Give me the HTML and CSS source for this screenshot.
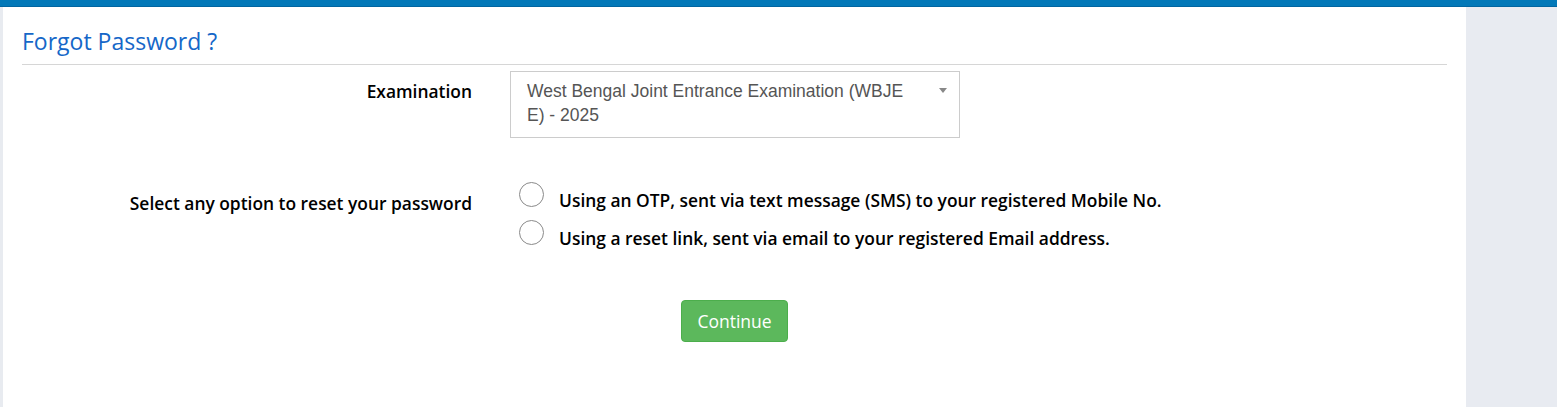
FILE: index.html
```html
<!DOCTYPE html>
<html lang="en">
<head>
    <meta charset="UTF-8">
    <meta name="viewport" content="width=device-width, initial-scale=1.0">
    <title>Forgot Password</title>
    <link rel="stylesheet" href="styles.css">
</head>
<body>

    <div class="top-bar"></div>

    <div class="page">
        <div class="side-strip"></div>

        <div class="main-panel">
            <h3 class="page-title">Forgot Password ?</h3>
            <hr class="title-rule">

            <form id="forgot-form" class="forgot-form">
                <div class="form-row exam-row">
                    <label class="form-label">Examination</label>
                    <div class="fake-select">
                        <span class="fake-select-text">West Bengal Joint Entrance Examination (WBJEE) - 2025</span>
                        <span class="fake-select-arrow"></span>
                    </div>
                </div>

                <div class="form-row option-row">
                    <label class="form-label option-label">Select any option to reset your password</label>
                    <div class="option-list">
                        <label class="option-item">
                            <input type="radio" name="resetmode" value="sms">
                            <span>Using an OTP, sent via text message (SMS) to your registered Mobile No.</span>
                        </label>
                        <label class="option-item">
                            <input type="radio" name="resetmode" value="email">
                            <span>Using a reset link, sent via email to your registered Email address.</span>
                        </label>
                    </div>
                </div>

                <div class="button-row">
                    <button type="submit" class="btn-continue">Continue</button>
                </div>
            </form>
        </div>

        <div class="side-panel"></div>
    </div>

</body>
</html>
```

FILE: styles.css
```css
html, body {
    height: 100%;
}

body {
    margin: 0;
    font-family: 'Open Sans', 'Liberation Sans', sans-serif;
    background-color: #e8ebf0;
    display: flex;
    flex-direction: column;
}

.top-bar {
    height: 6px;
    background-color: #0278b8;
    border-bottom: 1px solid #0165a0;
    flex-shrink: 0;
}

.page {
    flex: 1;
    display: flex;
}

.side-strip {
    width: 3px;
    background-color: #e8ebf0;
}

.main-panel {
    width: 1463px;
    box-sizing: border-box;
    background-color: #fff;
    padding: 21px 19px 0 19px;
}

.side-panel {
    flex: 1;
    background-color: #e8ebf1;
}

.page-title {
    margin: 0;
    font-size: 23px;
    font-weight: 500;
    line-height: 26px;
    color: #1567c8;
}

.title-rule {
    border: none;
    border-top: 1px solid #d6d6d6;
    margin: 10px 0 6px 0;
}

.form-row {
    display: grid;
    grid-template-columns: 450px 450px;
    column-gap: 38px;
}

.form-label {
    text-align: right;
    font-size: 17.4px;
    font-weight: 600;
    line-height: 24px;
    color: #000;
    padding-top: 8px;
}

.fake-select {
    display: flex;
    align-items: flex-start;
    height: 67px;
    box-sizing: border-box;
    border: 1px solid #cccccc;
    padding: 7px 12px 11px 16px;
    font-family: 'Liberation Sans', Arial, sans-serif;
    font-size: 17.5px;
    line-height: 24px;
    color: #555;
}

.fake-select-text {
    flex: 1;
    word-break: break-all;
    margin-right: 30px;
}

.fake-select-arrow {
    width: 0;
    height: 0;
    margin-top: 9px;
    border-left: 4px solid transparent;
    border-right: 4px solid transparent;
    border-top: 5px solid #888;
}

.option-row {
    margin-top: 43px;
}

.option-label {
    padding-top: 10px;
}

.option-list {
    display: flex;
    flex-direction: column;
    margin-left: 9px;
}

.option-item {
    display: flex;
    align-items: flex-start;
    height: 38px;
    font-size: 17.4px;
    font-weight: 600;
    line-height: 24px;
    color: #000;
    white-space: nowrap;
}

.option-item input[type="radio"] {
    appearance: none;
    -webkit-appearance: none;
    width: 25px;
    height: 25px;
    margin: 1px 15px 0 0;
    border: 1px solid #8a8a8a;
    border-radius: 50%;
    background-color: #fff;
    flex-shrink: 0;
}

    .option-item input[type="radio"]:checked {
        background: radial-gradient(#333 0 5px, #fff 6px);
    }

.option-item span {
    padding-top: 7px;
}

.button-row {
    display: flex;
    justify-content: center;
    margin-top: 43px;
}

.btn-continue {
    height: 42px;
    padding: 0 15px;
    border: 1px solid #4cae4c;
    border-radius: 4px;
    background-color: #5cb85c;
    color: #fff;
    font-family: 'Open Sans', 'Liberation Sans', sans-serif;
    font-size: 17.5px;
    cursor: pointer;
}

    .btn-continue:hover {
        background-color: #449d44;
    }
```
